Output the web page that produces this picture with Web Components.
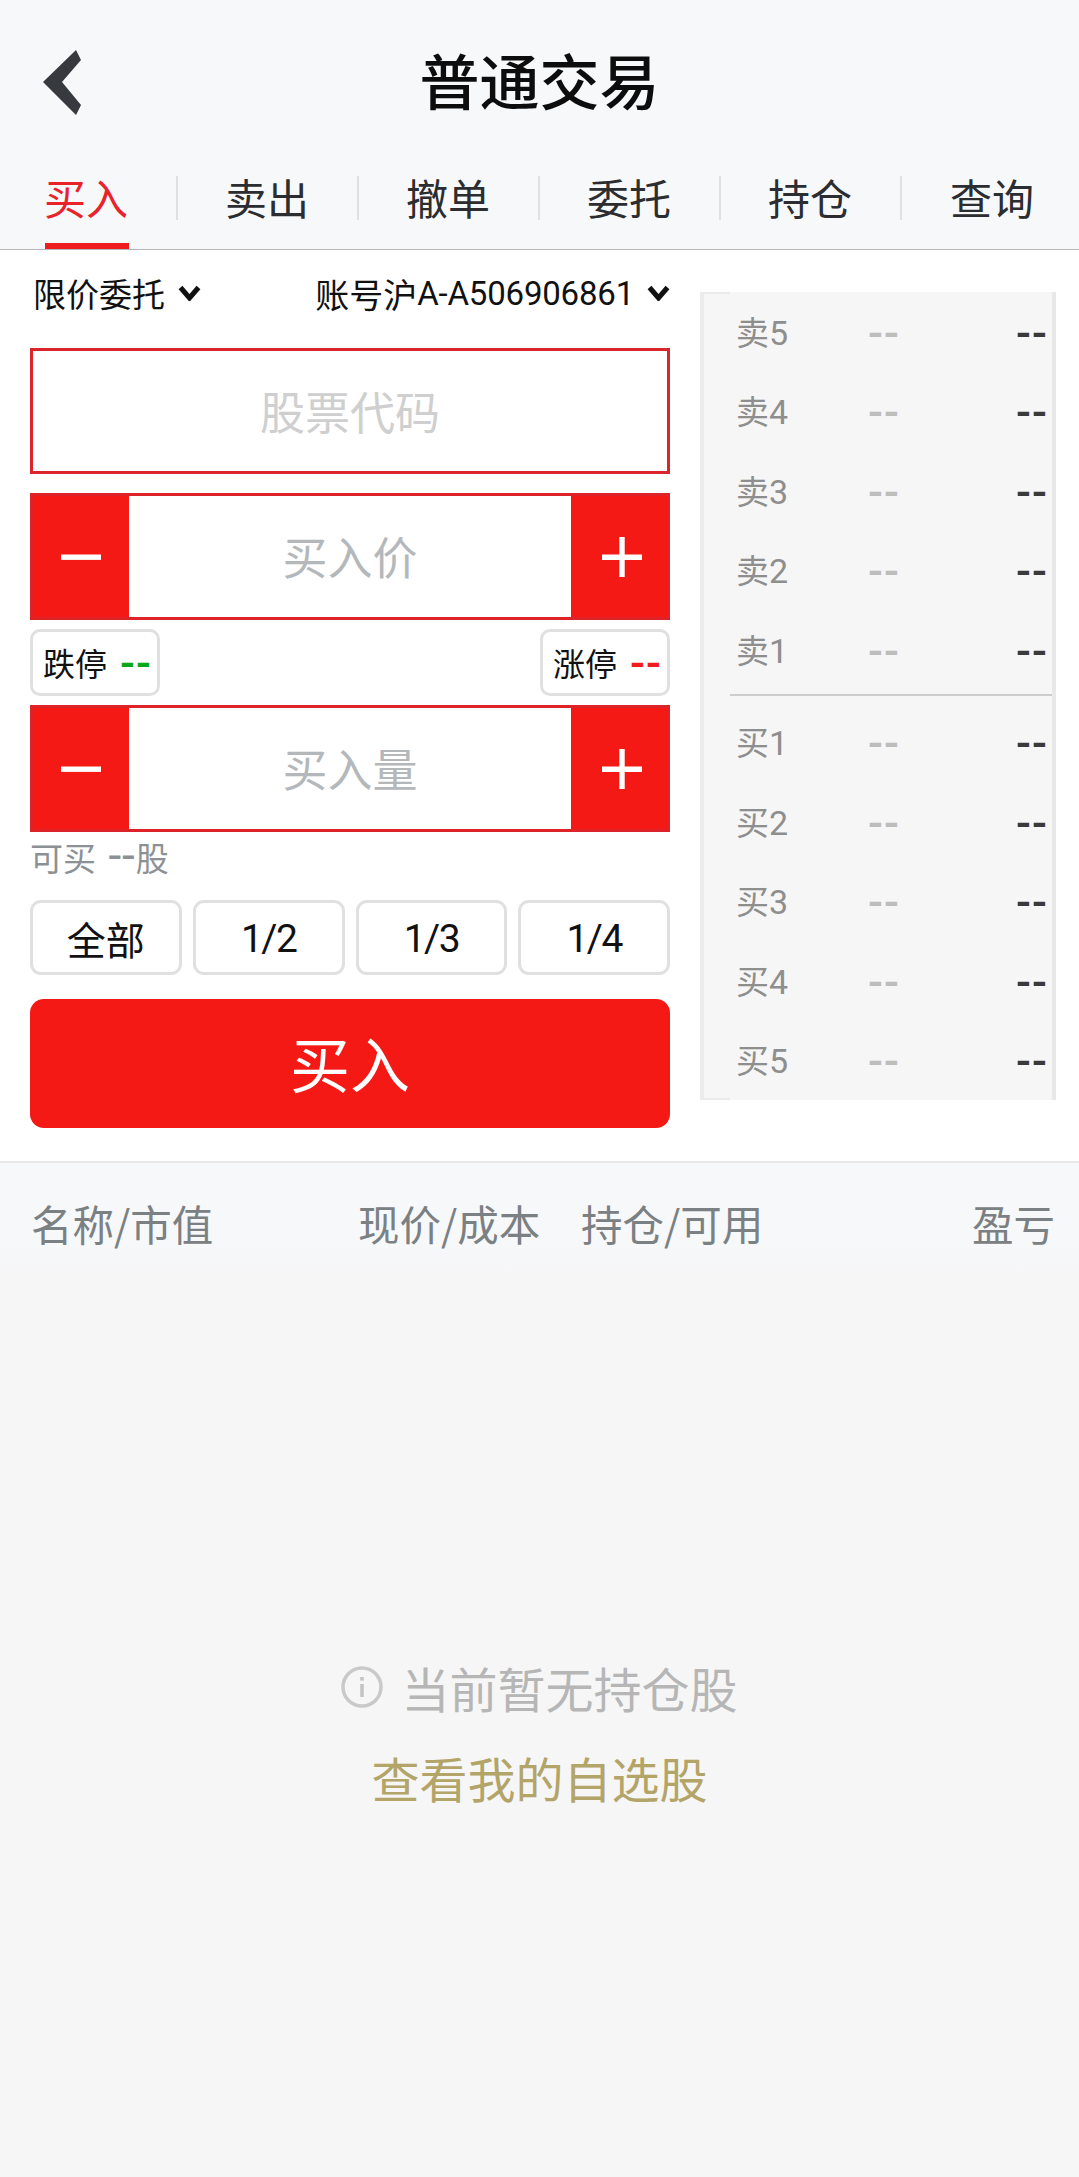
<!DOCTYPE html>
<html lang="zh-CN">
<head>
<meta charset="utf-8">
<title>普通交易</title>
<style>
  html, body { margin: 0; padding: 0; }
  body {
    width: 1079px;
    min-height: 2177px;
    background: #f6f6f7;
    font-family: "Noto Sans CJK SC", "Noto Sans", sans-serif;
    color: #111;
  }
</style>
</head>
<body>
<app-header titulo="普通交易"></app-header>
<trade-tabs itens="买入,卖出,撤单,委托,持仓,查询"></trade-tabs>
<trade-section>
  <trade-form></trade-form>
  <depth-panel></depth-panel>
</trade-section>
<holdings-list></holdings-list>

<script>
const VERMELHO = "#f41915";
const NUMEROS = '"Roboto", "Noto Sans CJK SC", sans-serif';
// hifens largos, como os da fonte original
const TRACO = `font: 500 44px/1 ${NUMEROS}; letter-spacing: 1px;`;

class AppHeader extends HTMLElement {
  connectedCallback() {
    this.attachShadow({ mode: "open" }).innerHTML = `
      <style>
        :host { display: grid; grid-template-columns: 1fr auto 1fr; align-items: center; height: 168px; background: #f7f8fa; }
        svg { margin: 0 0 3px 43px; display: block; }
        h1 { margin: 0; padding-bottom: 10px; font-size: 60px; font-weight: 500; line-height: 70px; color: #0d0d0d; }
      </style>
      <svg width="38" height="65" viewBox="0 0 38 65" aria-hidden="true">
        <path d="M33 0 L38 10 L19 32 L38 55 L33 65 L0 32 Z" fill="#36393d"/>
      </svg>
      <h1>${this.getAttribute("titulo")}</h1>`;
  }
}

class TradeTabs extends HTMLElement {
  connectedCallback() {
    const itens = this.getAttribute("itens").split(",");
    const html = itens.map((t, i) => `
      <div class="tab ${i === 0 ? "ativa" : ""} ${i === itens.length - 1 ? "fim" : ""}">
        <span class="rotulo">${t}</span>
        ${i === 0 ? '<i class="marca"></i>' : ""}
      </div>`).join("");
    this.attachShadow({ mode: "open" }).innerHTML = `
      <style>
        :host { display: flex; height: 82px; background: linear-gradient(#f7f8fa calc(100% - 1.5px), #b4b6b8 0); }
        .tab { flex: none; width: 181px; height: 81px; display: flex; flex-direction: column; align-items: center; }
        .tab.ativa, .tab.fim { width: 177.5px; }
        .rotulo {
          width: 100%; box-sizing: border-box; height: 44px; margin-top: 8px; padding-bottom: 3px;
          display: flex; align-items: center; justify-content: center;
          font-size: 42px; color: #2b2d30; border-right: 2px solid #dfe0e2;
        }
        .ativa .rotulo { color: #e8232a; padding-right: 3.5px; }
        .fim .rotulo { border-right: 0; padding-left: 3.5px; }
        .marca { width: 84px; height: 6px; margin: auto 3.5px 0 0; background: #ee1c1f; }
      </style>
      ${html}`;
  }
}

class TradeSection extends HTMLElement {
  connectedCallback() {
    this.attachShadow({ mode: "open" }).innerHTML = `
      <style>
        :host { display: flex; align-items: flex-start; gap: 30px; box-sizing: border-box; height: 913px; padding-left: 30px; background: #fff; border-bottom: 2px solid #e8e8e8; }
      </style>
      <slot></slot>`;
  }
}

class StepperInput extends HTMLElement {
  connectedCallback() {
    this.attachShadow({ mode: "open" }).innerHTML = `
      <style>
        :host { display: flex; height: 127px; box-sizing: border-box; border: 3px solid #dd2327; background: ${VERMELHO}; }
        .botao { width: 96px; display: flex; align-items: center; justify-content: center; }
        .botao.mais { padding-left: 5px; box-sizing: border-box; }
        .campo { flex: 1; padding-bottom: 2px; background: #fff; display: flex; align-items: center; justify-content: center; font-size: 45px; color: #b4b8bb; }
      </style>
      <div class="botao">
        <svg width="40" height="40" viewBox="0 0 40 40" aria-hidden="true"><rect x="0" y="17.5" width="40" height="5.4" fill="#fff"/></svg>
      </div>
      <div class="campo">${this.getAttribute("rotulo")}</div>
      <div class="botao mais">
        <svg width="40" height="40" viewBox="0 0 40 40" aria-hidden="true"><path d="M0 17.5H17.3V0H22.7V17.5H40V22.9H22.7V40H17.3V22.9H0Z" fill="#fff"/></svg>
      </div>`;
  }
}

class LimitChip extends HTMLElement {
  connectedCallback() {
    this.attachShadow({ mode: "open" }).innerHTML = `
      <style>
        :host { display: flex; align-items: center; gap: 13px; box-sizing: border-box; width: 130px; height: 67px; padding-left: 10px; border: 3px solid #e0e0e0; border-radius: 10px; font-size: 32px; color: #111; }
        span { padding-bottom: 2px; }
        b { ${TRACO} color: ${this.getAttribute("cor")}; }
      </style>
      <span>${this.getAttribute("rotulo")}</span><b>--</b>`;
  }
}

class TradeForm extends HTMLElement {
  connectedCallback() {
    const seta = `<svg width="23" height="16" viewBox="0 0 23 16" aria-hidden="true"><path d="M2.5 2.5 L11.5 13 L20.5 2.5" fill="none" stroke="#111" stroke-width="5"/></svg>`;
    this.attachShadow({ mode: "open" }).innerHTML = `
      <style>
        :host { display: block; width: 640px; }
        .ordem { display: flex; justify-content: space-between; align-items: center; height: 40px; margin-top: 23px; padding-left: 3px; font-size: 33px; color: #111; }
        .ordem span { display: flex; align-items: center; gap: 13px; }
        .conta { font-size: 34px; }
        .num { font-family: ${NUMEROS}; }
        .conta .num { font-size: 33px; letter-spacing: -0.2px; }
        .codigo { display: flex; align-items: center; justify-content: center; height: 126px; margin-top: 35px; padding-bottom: 2px; box-sizing: border-box; border: 3px solid #d8262b; font-size: 45px; color: #cfcfcf; }
        stepper-input.preco { margin-top: 19px; }
        .limites { display: flex; justify-content: space-between; margin-top: 9px; }
        stepper-input.qtd { margin-top: 9px; }
        .disponivel { height: 36px; line-height: 36px; font-size: 33px; color: #8c9196; }
        .disponivel b { font: 400 46px/1 ${NUMEROS}; letter-spacing: 1px; margin-left: 5px; }
        .partes { display: grid; grid-template-columns: repeat(4, 1fr); gap: 11px; margin-top: 32px; }
        .partes div { height: 75px; box-sizing: border-box; border: 3px solid #e0e0e0; border-radius: 11px; display: flex; align-items: center; justify-content: center; font-size: 39px; color: #111; }
        .partes .num { padding-top: 3px; letter-spacing: -1.5px; }
        .comprar { display: flex; align-items: center; justify-content: center; height: 129px; margin-top: 24px; padding-bottom: 5px; box-sizing: border-box; background: ${VERMELHO}; border-radius: 14px; font-size: 60px; color: #fff; }
      </style>
      <div class="ordem">
        <span>限价委托 ${seta}</span>
        <span><span class="conta" style="gap:0">账号沪<span class="num">A-A506906861</span></span> ${seta}</span>
      </div>
      <div class="codigo">股票代码</div>
      <stepper-input class="preco" rotulo="买入价"></stepper-input>
      <div class="limites">
        <limit-chip rotulo="跌停" cor="#09a81a"></limit-chip>
        <limit-chip rotulo="涨停" cor="#f01c1c"></limit-chip>
      </div>
      <stepper-input class="qtd" rotulo="买入量"></stepper-input>
      <div class="disponivel">可买 <b>--</b>股</div>
      <div class="partes">
        <div>全部</div><div class="num">1/2</div><div class="num">1/3</div><div class="num">1/4</div>
      </div>
      <div class="comprar">买入</div>`;
  }
}

class DepthPanel extends HTMLElement {
  connectedCallback() {
    const linha = (lado, n) => `
      <div class="linha">
        <span class="nome">${lado}<span class="num">${n}</span></span>
        <span class="traco medio">--</span>
        <span class="traco forte">--</span>
      </div>`;
    const vendas = [5, 4, 3, 2, 1].map(n => linha("卖", n)).join("");
    const compras = [1, 2, 3, 4, 5].map(n => linha("买", n)).join("");
    this.attachShadow({ mode: "open" }).innerHTML = `
      <style>
        :host {
          display: block; box-sizing: border-box; width: 356px; height: 808px; margin-top: 42px;
          border-left: 4px solid #ececec; border-right: 4px solid #e8e8e8;
          background:
            linear-gradient(#ebebeb, #ebebeb) left top / 26px 2px no-repeat,
            linear-gradient(#ebebeb, #ebebeb) left bottom / 26px 2px no-repeat,
            #f6f6f6;
        }
        .linha { display: grid; grid-template-columns: 132px 1fr auto; align-items: center; height: 79.5px; padding: 0 4px 0 32px; }
        .nome { padding-bottom: 2px; font-size: 33px; color: #8e8e8e; }
        .num { font-family: ${NUMEROS}; font-size: 34px; }
        .traco { ${TRACO} padding-top: 2px; }
        .medio { color: #bdbdbd; }
        .forte { color: #3a3a3a; }
        hr { margin: 4px 0 6.5px 26px; border: 0; height: 2.5px; background: #cdcdcd; }
      </style>
      ${vendas}<hr>${compras}`;
  }
}

class HoldingsList extends HTMLElement {
  connectedCallback() {
    this.attachShadow({ mode: "open" }).innerHTML = `
      <style>
        :host { display: block; font-size: 41.5px; }
        .cabecalho { display: flex; align-items: center; height: 112px; box-sizing: border-box; padding: 8px 24px 0 31px; color: #7b8083; background: linear-gradient(#f7f8fa 70%, #f6f6f7); }
        .cabecalho span:nth-child(1) { width: 327px; }
        .cabecalho span:nth-child(2) { width: 223px; }
        .cabecalho span:nth-child(3) { flex: 1; }
        .vazio { display: flex; flex-direction: column; align-items: center; padding-top: 382px; font-size: 48px; }
        .aviso { display: flex; align-items: center; gap: 18px; color: #b6b6b6; height: 60px; }
        .link { margin-top: 30px; height: 60px; line-height: 60px; color: #b3a468; }
        svg { display: block; }
      </style>
      <div class="cabecalho">
        <span>名称/市值</span><span>现价/成本</span><span>持仓/可用</span><span>盈亏</span>
      </div>
      <div class="vazio">
        <div class="aviso">
          <svg width="42" height="42" viewBox="0 0 42 42" aria-hidden="true">
            <circle cx="21" cy="21" r="19" fill="none" stroke="#c9c9c9" stroke-width="3.5"/>
            <rect x="19.2" y="11" width="3.6" height="3.6" fill="#c4c4c4"/>
            <rect x="19.2" y="18" width="3.6" height="13" fill="#c4c4c4"/>
          </svg>
          <span>当前暂无持仓股</span>
        </div>
        <div class="link">查看我的自选股</div>
      </div>`;
  }
}

customElements.define("app-header", AppHeader);
customElements.define("trade-tabs", TradeTabs);
customElements.define("trade-section", TradeSection);
customElements.define("stepper-input", StepperInput);
customElements.define("limit-chip", LimitChip);
customElements.define("trade-form", TradeForm);
customElements.define("depth-panel", DepthPanel);
customElements.define("holdings-list", HoldingsList);
</script>
</body>
</html>
